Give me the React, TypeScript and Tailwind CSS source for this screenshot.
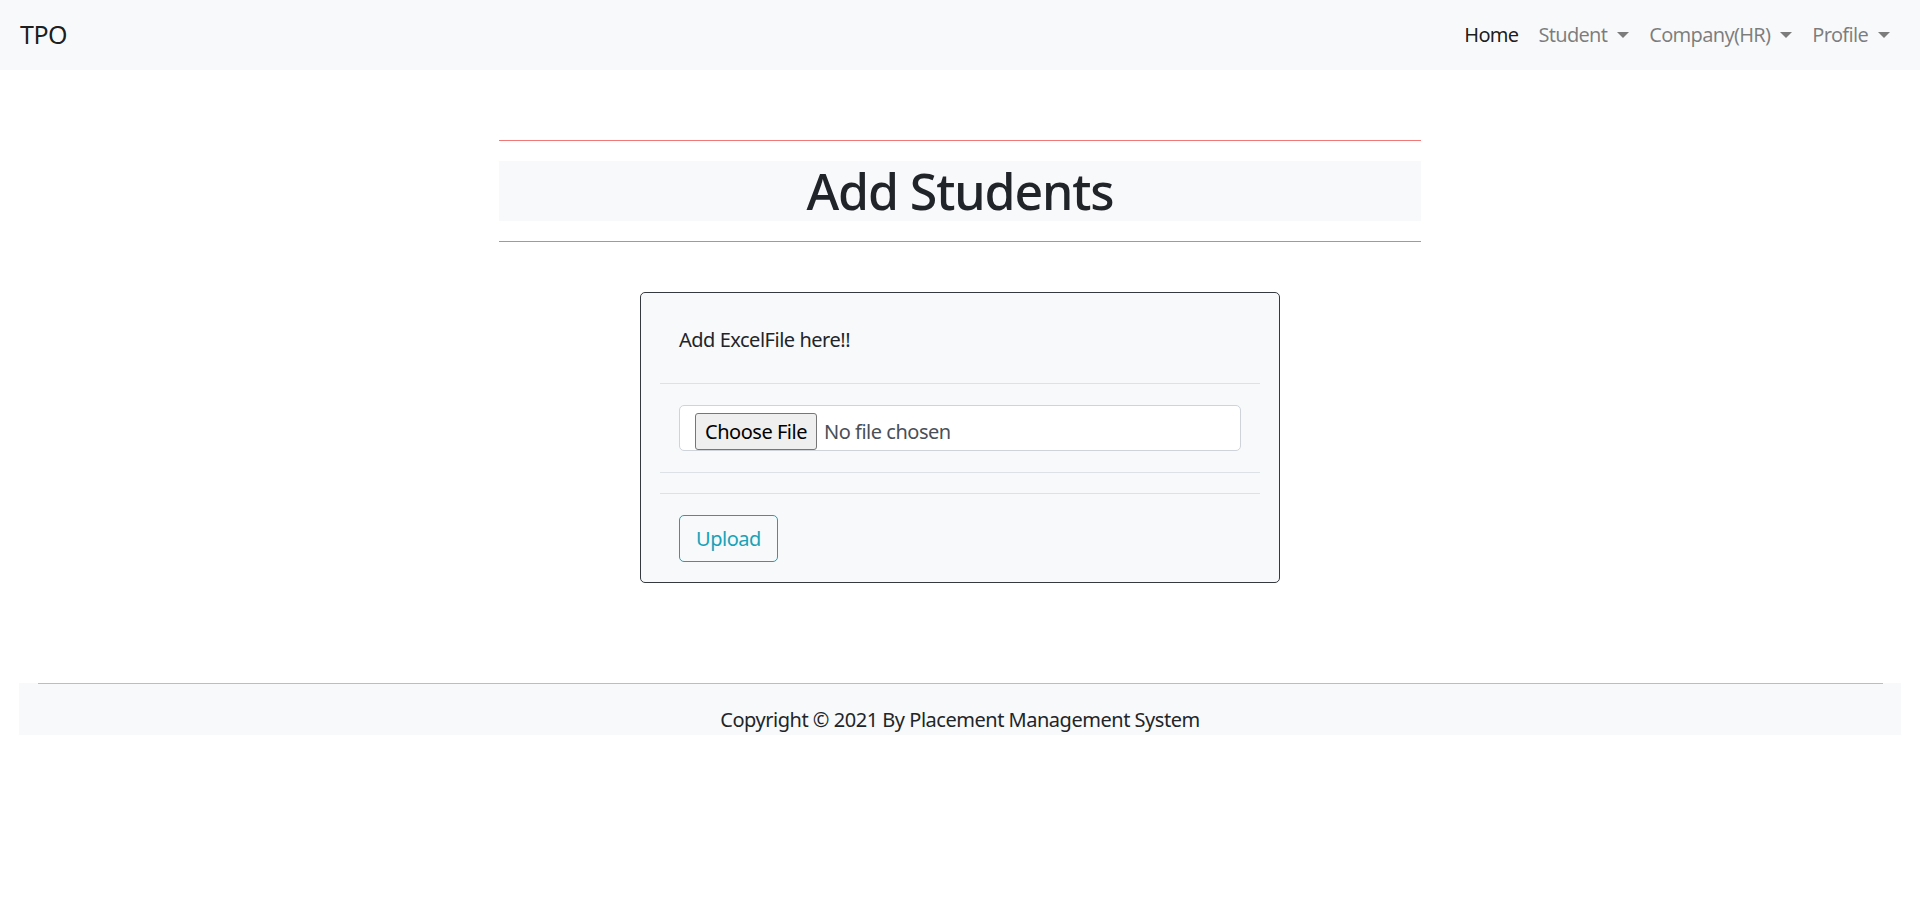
import React from "react";

function Caret() {
  return (
    <span className="ml-[10px] inline-block h-0 w-0 border-x-[6px] border-t-[6px] border-x-transparent border-t-current" />
  );
}

export default function App() {
  return (
    <div className="min-h-[902px] bg-white text-[#212529] font-['Noto_Sans',sans-serif] tracking-[-0.03em]">
      <nav className="flex h-[70px] items-center justify-between bg-[#f8f9fa] px-[20px]">
        <span className="text-[25px] leading-[37.5px] text-black/90">TPO</span>
        <ul className="flex items-center text-[20px] leading-[30px] tracking-[-0.035em]">
          <li className="px-[10px] text-black/90">Home</li>
          <li className="flex items-center px-[10px] text-black/50">
            Student
            <Caret />
          </li>
          <li className="flex items-center px-[10px] text-black/50">
            Company(HR)
            <Caret />
          </li>
          <li className="flex items-center px-[10px] text-black/50">
            Profile
            <Caret />
          </li>
        </ul>
      </nav>

      <div className="mx-auto mt-[70px] w-[922px]">
        <div className="h-px bg-[#f07878]" />
        <div className="mt-[20px] bg-[#f8f9fa]">
          <h1 className="text-center text-[50px] font-medium leading-[60px] tracking-[-0.022em] text-[#212529]">
            Add Students
          </h1>
        </div>
        <div className="mt-[20px] h-px bg-[#f07878]" />
      </div>

      <div className="mx-auto mt-[50px] w-[640px] rounded-[5px] border border-[#343a40] bg-[#f8f9fa] px-[19px]">
        <div className="border-b border-[#dee2e6] px-[19px] pb-[28px] pt-[32px] text-[20px] leading-[30px]">
          Add ExcelFile here!!
        </div>
        <div className="border-b border-[#dee2e6] px-[19px] py-[21px]">
          <div className="h-[46px] overflow-hidden rounded-[5px] border border-[#ced4da] bg-white pl-[15px] pt-[7px]">
            <div className="flex h-[37px] items-center text-[20px] leading-[30px]">
              <span className="flex h-[37px] items-center rounded-[3px] border border-[#767676] bg-[#efefef] px-[9px] text-black">
                Choose File
              </span>
              <span className="ml-[7px] text-[#495057]">No file chosen</span>
            </div>
          </div>
        </div>
        <div className="h-[21px] border-b border-[#dee2e6]" />
        <div className="px-[19px] pb-[20px] pt-[21px]">
          <button className="flex h-[47px] items-center rounded-[5px] border border-[#17a2b8] px-[16px] text-[20px] leading-[30px] text-[#17a2b8]">
            Upload
          </button>
        </div>
      </div>

      <footer className="mx-[19px] mt-[100px] bg-[#f8f9fa]">
        <div className="ml-[19px] mr-[18px] h-px bg-[#8ecbf0]" />
        <p className="pt-[21px] text-center text-[20px] leading-[30px] text-[#212529]">
          Copyright © 2021 By Placement Management System
        </p>
      </footer>
    </div>
  );
}
